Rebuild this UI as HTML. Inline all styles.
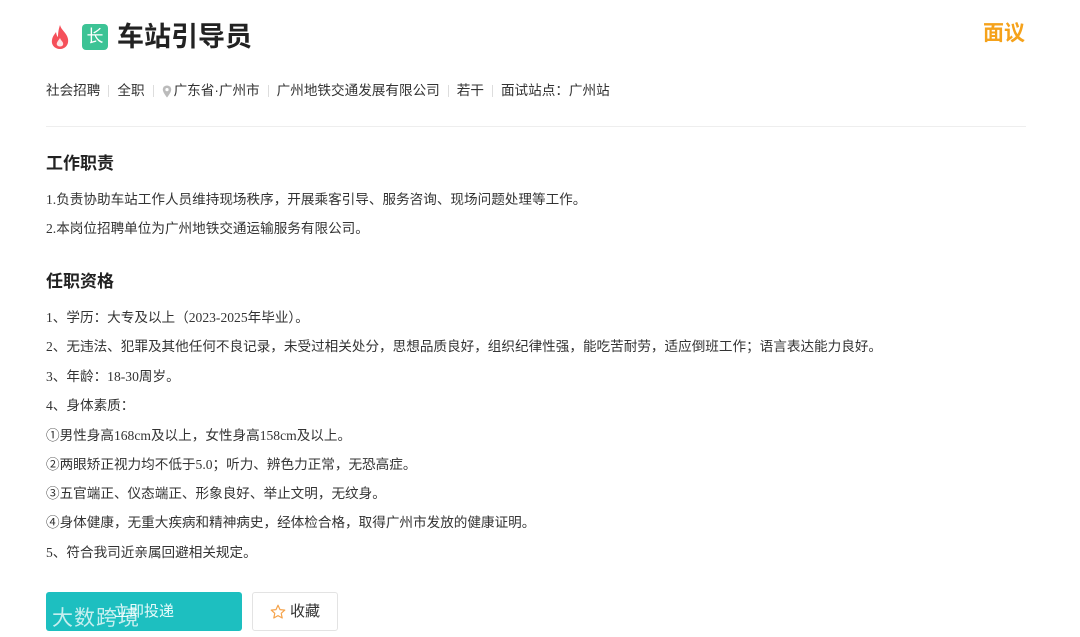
<!DOCTYPE html>
<html><head><meta charset="utf-8"><style>
body{margin:0;width:1080px;height:637px;background:#fff;overflow:hidden;font-family:"Liberation Sans","Noto Sans CJK SC",sans-serif;color:#333;position:relative}
.abs{position:absolute}
.title{left:117px;top:18px;font-size:27px;font-weight:bold;color:#222;line-height:38px}
.salary{right:55px;top:19px;font-size:21px;font-weight:bold;color:#f5a21b;line-height:30px}
.meta{left:46px;top:81px;font-size:13.6px;line-height:20px;color:#333;display:flex;align-items:center}
.sep{display:inline-block;width:1px;height:12px;background:#ddd;margin:0 8px}
.hr{left:46px;top:126px;width:980px;height:1px;background:#eee}
h3{position:absolute;left:46px;margin:0;font-size:17px;font-weight:bold;color:#222;line-height:24px}
.p{position:absolute;left:46px;font-size:13.6px;line-height:20px;color:#333;font-family:"Liberation Serif","Noto Sans CJK SC",serif;white-space:nowrap}
.btn{left:46px;top:592px;width:196px;height:39px;background:#1dbfc0;border-radius:3px;color:#e8fbfb;font-size:15px;text-align:center;line-height:39px}
.fav{left:252px;top:592px;width:84px;height:37px;border:1px solid #e3e3e3;border-radius:3px;font-size:15px;line-height:37px;color:#333;display:flex;align-items:center;justify-content:center;gap:4px}
</style></head><body>
<svg class="abs" style="left:49px;top:24px" width="22" height="26" viewBox="0 0 22 26"><path d="M11 1C12 6 18 9 19 15C20 21 16 25 11 25C6 25 2 21 3 16C3.5 12 6 10 7 8C7.5 11 8 12 9 13C9 8 10 4 11 1Z" fill="#f5505a"/><path d="M11 14C12 17 15 18 14 21C13 23 9 23 8 21C7 19 9 17 11 14Z" fill="#fff" opacity=".85"/></svg>
<div class="abs" style="left:82px;top:24px;width:26px;height:26px;background:#3cc395;border-radius:4px;color:#fff;font-size:17px;line-height:26px;text-align:center">长</div>
<div class="abs title">车站引导员</div>
<div class="abs salary">面议</div>
<div class="abs meta">社会招聘<span class="sep"></span>全职<span class="sep"></span><svg width="10" height="13" viewBox="0 0 10 13" style="margin-right:2px"><path d="M5 0.5C2.5 0.5 0.8 2.3 0.8 4.6C0.8 7.5 5 12.5 5 12.5S9.2 7.5 9.2 4.6C9.2 2.3 7.5 0.5 5 0.5Z" fill="#bbb"/><circle cx="5" cy="4.6" r="1.6" fill="#fff"/></svg>广东省·广州市<span class="sep"></span>广州地铁交通发展有限公司<span class="sep"></span>若干<span class="sep"></span>面试站点：广州站</div>
<div class="abs hr"></div>
<h3 style="top:152px">工作职责</h3>
<div class="p" style="top:190px">1.负责协助车站工作人员维持现场秩序，开展乘客引导、服务咨询、现场问题处理等工作。</div>
<div class="p" style="top:219px">2.本岗位招聘单位为广州地铁交通运输服务有限公司。</div>
<h3 style="top:270px">任职资格</h3>
<div class="p" style="top:308px">1、学历：大专及以上（2023-2025年毕业）。</div>
<div class="p" style="top:337px">2、无违法、犯罪及其他任何不良记录，未受过相关处分，思想品质良好，组织纪律性强，能吃苦耐劳，适应倒班工作；语言表达能力良好。</div>
<div class="p" style="top:367px">3、年龄：18-30周岁。</div>
<div class="p" style="top:396px">4、身体素质：</div>
<div class="p" style="top:426px">①男性身高168cm及以上，女性身高158cm及以上。</div>
<div class="p" style="top:455px">②两眼矫正视力均不低于5.0；听力、辨色力正常，无恐高症。</div>
<div class="p" style="top:484px">③五官端正、仪态端正、形象良好、举止文明，无纹身。</div>
<div class="p" style="top:513px">④身体健康，无重大疾病和精神病史，经体检合格，取得广州市发放的健康证明。</div>
<div class="p" style="top:543px">5、符合我司近亲属回避相关规定。</div>
<div class="abs btn">立即投递</div>
<div class="abs fav"><svg width="16" height="16" viewBox="0 0 16 16"><path d="M8 1.2L10 5.6L14.8 6.1L11.2 9.3L12.2 14L8 11.6L3.8 14L4.8 9.3L1.2 6.1L6 5.6Z" fill="none" stroke="#f5a34b" stroke-width="1.2" stroke-linejoin="round"/></svg>收藏</div>
<div class="abs" style="left:52px;top:602px;font-size:21px;color:rgba(255,255,255,.75);letter-spacing:1px">大数跨境</div>
</body></html>
